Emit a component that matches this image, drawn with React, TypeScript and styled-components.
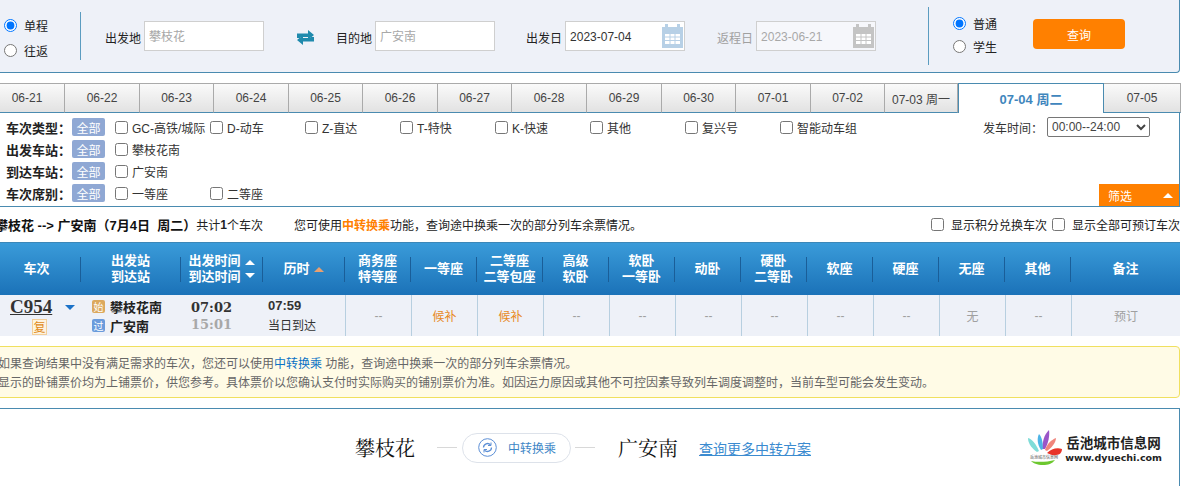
import styled, {createGlobalStyle} from 'styled-components'

const teal = '#4a8bb0'
const cols = '81px 100px 82px 82px repeat(11, 66px) 109px'

const GlobalStyle = createGlobalStyle`
  html, body {
    margin: 0;
    width: 1188px;
    height: 486px;
    overflow: hidden;
    background: #fff;
  }
  body {
    font-family: "Liberation Sans", "Noto Sans CJK SC", sans-serif;
    font-size: 12px;
    color: #333;
  }
  input[type="radio"], input[type="checkbox"] {
    margin: 0;
    width: 13px;
    height: 13px;
    flex: none;
  }
`

const Page = styled.div`
  width: 1180px;
  height: 486px;
  display: flex;
  flex-direction: column;
`

const SearchPanel = styled.form`
  box-sizing: border-box;
  height: 73px;
  flex: none;
  display: flex;
  align-items: center;
  background: #eef1f8;
  border-bottom: 1px solid ${teal};
  border-right: 1px solid ${teal};
  border-bottom-right-radius: 4px;
`

const RadioGroup = styled.div<{ $left: number; $width: number; $gap: number; $top: number }>`
  width: ${p => p.$width}px;
  margin-left: ${p => p.$left}px;
  margin-top: ${p => p.$top}px;
  flex: none;
  display: flex;
  flex-direction: column;
  gap: ${p => p.$gap}px;
`

const RadioLabel = styled.label`
  display: flex;
  align-items: center;
  gap: 7px;
  height: 14px;
  color: #222;
`

const Divider = styled.div<{ $left: number; $height: number }>`
  width: 1px;
  height: ${p => p.$height}px;
  margin-left: ${p => p.$left}px;
  background: #5b9cc0;
  flex: none;
`

const Field = styled.div<{ $left: number; $off?: boolean }>`
  display: flex;
  align-items: center;
  gap: 3px;
  margin-left: ${p => p.$left}px;
  color: ${p => (p.$off ? '#a0a0a0' : '#222')};
  flex: none;
`

const FieldLabel = styled.span`
  padding-top: 3px;
`

const FieldBox = styled.div<{ $off?: boolean }>`
  box-sizing: border-box;
  width: 120px;
  height: 30px;
  display: flex;
  align-items: center;
  padding: 0 1px 0 4px;
  background: ${p => (p.$off ? '#f6f7fb' : '#fff')};
  border: 1px solid #cfcfcf;
`

const FieldInput = styled.input`
  flex: 1;
  min-width: 0;
  border: 0;
  padding: 2px 0 0;
  outline: 0;
  background: transparent;
  color: #333;
  font: inherit;

  &::placeholder {
    color: #a8a8a8;
  }

  &:disabled {
    color: #a8a8a8;
  }
`

const SwapButton = styled.button`
  margin: 2px 0 0 33px;
  width: 17px;
  height: 15px;
  padding: 0;
  border: 0;
  background: none;
  flex: none;
  display: flex;
`

const SearchButton = styled.button`
  width: 92px;
  height: 30px;
  flex: none;
  margin-top: -4px;
  border: 0;
  border-radius: 4px;
  background: #ff8000;
  color: #fff;
  font: inherit;
`

const Tabs = styled.div`
  margin: 10px 0 0 -10px;
  height: 30px;
  flex: none;
  display: flex;
`

const Tab = styled.div<{ $w: number; $active?: boolean }>`
  box-sizing: border-box;
  width: ${p => p.$w}px;
  flex: none;
  display: flex;
  align-items: center;
  justify-content: center;
  white-space: nowrap;
  font-weight: ${p => (p.$active ? 700 : 400)};
  font-size: ${p => (p.$active ? 13 : 12)}px;
  color: ${p => (p.$active ? '#3f86bd' : '#444')};
  background: ${p => (p.$active ? '#fff' : 'linear-gradient(#fafafa, #e2e2e2)')};
  border-top: 1px solid ${p => (p.$active ? teal : '#aaa')};
  border-right: 1px solid ${p => (p.$active ? teal : '#aaa')};
  border-left: ${p => (p.$active ? `1px solid ${teal}` : '0')};
  border-bottom: ${p => (p.$active ? '0' : `1px solid ${teal}`)};
`

const FilterPanel = styled.div`
  box-sizing: border-box;
  height: 94px;
  flex: none;
  padding-top: 3px;
  border-right: 1px solid ${teal};
  border-bottom: 1px solid ${teal};
  display: flex;
  flex-direction: column;
`

const FilterRow = styled.div`
  height: 22px;
  flex: none;
  display: flex;
  align-items: center;
  padding-left: 6px;
`

const FilterName = styled.span`
  width: 60px;
  flex: none;
  font-size: 13px;
  font-weight: 700;
  white-space: nowrap;
  color: #222;
`

const AllTag = styled.span`
  box-sizing: border-box;
  width: 33px;
  height: 18px;
  margin: 0 10px 0 6px;
  flex: none;
  display: flex;
  align-items: center;
  justify-content: center;
  background: #8fa8d4;
  border-radius: 2px;
  color: #fff;
`

const Option = styled.label`
  width: 95px;
  flex: none;
  display: flex;
  align-items: center;
  gap: 4px;
  white-space: nowrap;
  color: #333;
`

const TimeFilter = styled.div`
  margin-left: auto;
  margin-right: 29px;
  display: flex;
  align-items: center;
  gap: 4px;
  color: #333;
`

const TimeSelect = styled.select`
  width: 103px;
  height: 20px;
  padding: 0;
  font: inherit;
  color: #444;
  background: #fff;
  border: 1px solid #767676;
  border-radius: 2px;
`

const FilterToggle = styled.div`
  box-sizing: border-box;
  width: 80px;
  height: 22px;
  margin: 2px 0 -2px auto;
  padding: 0 6px 0 9px;
  display: flex;
  align-items: center;
  justify-content: space-between;
  background: #ff8000;
  color: #fff;
`

const Arrow = styled.i<{ $up?: boolean; $color: string; $size?: number }>`
  display: block;
  flex: none;
  width: 0;
  height: 0;
  border-left: ${p => p.$size ?? 5}px solid transparent;
  border-right: ${p => p.$size ?? 5}px solid transparent;
  border-bottom: ${p => (p.$up ? `${p.$size ?? 5}px solid ${p.$color}` : '0')};
  border-top: ${p => (p.$up ? '0' : `${p.$size ?? 5}px solid ${p.$color}`)};
`

const SummaryBar = styled.div`
  height: 35px;
  flex: none;
  display: flex;
  align-items: center;
  white-space: nowrap;
  color: #222;
`

const Route = styled.b`
  margin-left: -5px;
  font-size: 13px;
  color: #111;
`

const TransferHint = styled.span`
  margin-left: 31px;
`

const Hot = styled.b`
  color: #ff8000;
`

const SummaryChecks = styled.div`
  margin-left: auto;
  display: flex;
  align-items: center;
  gap: 5px;
`

const SummaryCheck = styled.label`
  display: flex;
  align-items: center;
  gap: 7px;
`

const HeadRow = styled.div`
  box-sizing: border-box;
  height: 53px;
  flex: none;
  display: grid;
  grid-template-columns: ${cols};
  align-items: center;
  background: linear-gradient(#3a9bd9, #1b72b8);
  border-top: 1px solid #3b87b8;
  color: #fff;
  font-size: 13px;
  font-weight: 700;
  line-height: 16px;
  text-align: center;
`

const HeadCell = styled.div`
  box-sizing: border-box;
  height: 25px;
  display: flex;
  align-items: center;
  justify-content: center;
  gap: 4px;
  border-right: 1px solid #1a5e98;

  &:first-child {
    padding-right: 7px;
  }

  &:last-child {
    border-right: 0;
  }
`

const SortArrows = styled.span`
  display: flex;
  flex-direction: column;
  gap: 8px;
`

const BodyRow = styled.div`
  height: 41px;
  flex: none;
  display: grid;
  grid-template-columns: ${cols};
  background: #eef1f8;
`

const TrainCell = styled.div`
  padding: 2px 0 0 10px;
  display: grid;
  grid-template-columns: 55px 12px;
  align-items: center;
  justify-items: start;
`

const TrainNo = styled.a`
  font-family: "Liberation Serif", serif;
  font-weight: 700;
  font-size: 19px;
  line-height: 18px;
  color: #333;
  text-decoration: underline;
`

const FuxingTag = styled.span`
  box-sizing: border-box;
  width: 15px;
  height: 16px;
  margin-left: 22px;
  display: flex;
  align-items: center;
  justify-content: center;
  background: #fdf3df;
  border: 1px solid #f3cf9a;
  color: #e08a20;
  font-size: 12px;
`

const StationCell = styled.div`
  padding-left: 11px;
  display: flex;
  flex-direction: column;
  justify-content: center;
  gap: 3px;
`

const Station = styled.div`
  height: 16px;
  display: flex;
  align-items: center;
  gap: 5px;
  font-size: 13px;
  font-weight: 700;
  color: #222;
`

const StationBadge = styled.span<{ $bg: string }>`
  width: 13px;
  height: 13px;
  display: flex;
  align-items: center;
  justify-content: center;
  border-radius: 2px;
  background: ${p => p.$bg};
  color: #fff;
  font-size: 10px;
  font-weight: 400;
`

const TimeCell = styled.div`
  padding-left: 10px;
  display: flex;
  flex-direction: column;
  justify-content: center;
`

const TimeText = styled.div<{ $gray?: boolean }>`
  font-family: "DejaVu Serif", serif;
  font-weight: 700;
  font-size: 13px;
  line-height: 17px;
  color: ${p => (p.$gray ? '#a8a8a8' : '#333')};
`

const DurationCell = styled.div`
  padding-left: 5px;
  display: flex;
  flex-direction: column;
  justify-content: center;
  gap: 3px;
  color: #333;
`

const Duration = styled.b`
  font-size: 13px;
  line-height: 15px;
`

const SeatCell = styled.div<{ $color?: string }>`
  display: flex;
  align-items: center;
  justify-content: center;
  border-left: 1px solid #b7cfe0;
  color: ${p => p.$color ?? '#a0a0a0'};
`

const Notice = styled.div`
  box-sizing: border-box;
  height: 52px;
  margin: 10px 0 10px -10px;
  flex: none;
  padding: 8px 0 0 7px;
  background: #fffbe6;
  border: 1px solid #f0e05f;
  border-radius: 4px;
  color: #666;
  line-height: 19px;
  white-space: nowrap;
`

const NoticeLink = styled.a`
  color: #0a72c5;
`

const TransferPanel = styled.div`
  flex: 1;
  display: flex;
  align-items: center;
  padding: 0 17px 0 355px;
  border-top: 1px solid ${teal};
  border-right: 1px solid ${teal};
`

const CityName = styled.span<{ $left?: number }>`
  margin-left: ${p => p.$left ?? 0}px;
  font-family: "Liberation Serif", "Noto Serif CJK SC", "Noto Sans CJK SC", serif;
  font-size: 20px;
  color: #111;
`

const Line = styled.i<{ $left?: number }>`
  display: block;
  width: 20px;
  height: 1px;
  margin-left: ${p => p.$left ?? 0}px;
  background: #d8d8d8;
  flex: none;
`

const TransferPill = styled.div`
  box-sizing: border-box;
  width: 109px;
  height: 30px;
  margin: 0 4px 0 5px;
  display: flex;
  align-items: center;
  gap: 11px;
  padding-left: 15px;
  border: 1px solid #dde2ea;
  border-radius: 15px;
  color: #3d86c6;
  flex: none;
`

const MoreLink = styled.a`
  margin-left: 21px;
  font-size: 14px;
  color: #3b8bd0;
  text-decoration: underline;
`

const Logo = styled.div`
  margin-left: auto;
  display: flex;
  align-items: center;
  gap: 1px;
`

const LogoText = styled.div`
  margin-top: 3px;
  display: flex;
  flex-direction: column;
  align-items: center;
  color: #222;
  font-weight: 700;
`

const LogoName = styled.span`
  font-size: 13.5px;
  line-height: 16px;
`

const LogoUrl = styled.span`
  font-family: "DejaVu Sans", sans-serif;
  font-size: 9.5px;
  line-height: 11px;
`

const Calendar = ({color}: { color: string }) => (
  <svg width="21" height="24" viewBox="0 0 21 24">
    <rect x="0" y="3" width="21" height="21" fill={color}/>
    <rect x="3" y="0" width="3" height="5" fill={color}/>
    <rect x="15" y="0" width="3" height="5" fill={color}/>
    <path d="M3 10h15v10H3z" fill="#fff"/>
    <path d="M3 13h15M3 16.500h15M8 10v10M13 10v10" stroke={color} strokeWidth="1"/>
  </svg>
)

const SwapIcon = () => (
  <svg width="17" height="15" viewBox="0 0 17 15">
    <path d="M0 8V3.500h11V0l6 5-6 5V7H3v1z" fill="#1f8aad"/>
    <path d="M17 7v4.500H6V15l-6-5 6-5v3h8V7z" fill="#1f8aad"/>
  </svg>
)

const TransferIcon = () => (
  <svg width="19" height="19" viewBox="0 0 19 19" fill="none" stroke="#5c8fd6">
    <circle cx="9.500" cy="9.500" r="8.800"/>
    <path d="M5.500 9.500a4 4 0 0 1 7-2.600M13.500 9.500a4 4 0 0 1-7 2.600" strokeWidth="1.300"/>
    <path d="M13 4.500v3h-3M6 14.500v-3h3" strokeWidth="1"/>
  </svg>
)

const LogoMark = () => (
  <svg width="36" height="36" viewBox="0 0 36 36">
    <path d="M9 22C2 17 0 12 0 8c4 1 8 6 11 13z" fill="#7fdcd8"/>
    <path d="M13 20C9 14 9 8 11 4c3 3 4 9 4 15z" fill="#4db4e6"/>
    <path d="M15 19c-1-7 1-14 6-19 1 6-1 14-4 19z" fill="#9a55c8"/>
    <path d="M17 20c2-6 6-10 11-12 0 5-5 10-9 13z" fill="#f0857c"/>
    <path d="M19 23c4-4 10-6 15-4 0 3-2 6-6 6-4 1-6-1-9-2z" fill="#e8352a"/>
    <text x="16" y="29" fontSize="4" textAnchor="middle" fontFamily="Noto Sans CJK SC" fill="#555">岳池城市信息网</text>
    <path d="M3 31c7 1.500 16 1 24-1-3 4-7 5-12 5-6 0-10-2-12-4z" fill="#6cc72e"/>
  </svg>
)

const tabs: [string, number][] = [
  ['06-21', 75], ['06-22', 75], ['06-23', 74], ['06-24', 75], ['06-25', 74], ['06-26', 75],
  ['06-27', 74], ['06-28', 75], ['06-29', 75], ['06-30', 74], ['07-01', 75], ['07-02', 74],
  ['07-03 周一', 73]
]

const typeOptions = ['GC-高铁/城际', 'D-动车', 'Z-直达', 'T-特快', 'K-快速', '其他', '复兴号', '智能动车组']

const seats: [string, string?][] = [
  ['--'], ['候补', '#e8891c'], ['候补', '#e8891c'], ['--'], ['--'], ['--'], ['--'],
  ['--'], ['--'], ['无'], ['--'], ['预订']
]

export default function App() {
  return (
    <Page>
      <GlobalStyle/>
      <SearchPanel>
        <RadioGroup $left={4} $width={76} $gap={11} $top={3}>
          <RadioLabel><input type="radio" name="trip" defaultChecked/>单程</RadioLabel>
          <RadioLabel><input type="radio" name="trip"/>往返</RadioLabel>
        </RadioGroup>
        <Divider $left={0} $height={48}/>
        <Field $left={24}>
          <FieldLabel>出发地</FieldLabel>
          <FieldBox><FieldInput placeholder="攀枝花"/></FieldBox>
        </Field>
        <SwapButton type="button" aria-label="swap"><SwapIcon/></SwapButton>
        <Field $left={22}>
          <FieldLabel>目的地</FieldLabel>
          <FieldBox><FieldInput placeholder="广安南"/></FieldBox>
        </Field>
        <Field $left={31}>
          <FieldLabel>出发日</FieldLabel>
          <FieldBox><FieldInput defaultValue="2023-07-04"/><Calendar color="#b7d0e6"/></FieldBox>
        </Field>
        <Field $left={32} $off>
          <FieldLabel>返程日</FieldLabel>
          <FieldBox $off><FieldInput disabled defaultValue="2023-06-21"/><Calendar color="#c4c4c4"/></FieldBox>
        </Field>
        <Divider $left={52} $height={58}/>
        <RadioGroup $left={24} $width={80} $gap={9} $top={-2}>
          <RadioLabel><input type="radio" name="who" defaultChecked/>普通</RadioLabel>
          <RadioLabel><input type="radio" name="who"/>学生</RadioLabel>
        </RadioGroup>
        <SearchButton type="button">查询</SearchButton>
      </SearchPanel>

      <Tabs>
        {tabs.map(([label, w]) => <Tab key={label} $w={w}>{label}</Tab>)}
        <Tab $w={146} $active>07-04 周二</Tab>
        <Tab $w={77}>07-05</Tab>
      </Tabs>

      <FilterPanel>
        <FilterRow>
          <FilterName>车次类型：</FilterName>
          <AllTag>全部</AllTag>
          {typeOptions.map(o => <Option key={o}><input type="checkbox"/>{o}</Option>)}
          <TimeFilter>
            发车时间：
            <TimeSelect defaultValue="all"><option value="all">00:00--24:00</option></TimeSelect>
          </TimeFilter>
        </FilterRow>
        <FilterRow>
          <FilterName>出发车站：</FilterName>
          <AllTag>全部</AllTag>
          <Option><input type="checkbox"/>攀枝花南</Option>
        </FilterRow>
        <FilterRow>
          <FilterName>到达车站：</FilterName>
          <AllTag>全部</AllTag>
          <Option><input type="checkbox"/>广安南</Option>
        </FilterRow>
        <FilterRow>
          <FilterName>车次席别：</FilterName>
          <AllTag>全部</AllTag>
          <Option><input type="checkbox"/>一等座</Option>
          <Option><input type="checkbox"/>二等座</Option>
          <FilterToggle>筛选<Arrow $up $color="#fff"/></FilterToggle>
        </FilterRow>
      </FilterPanel>

      <SummaryBar>
        <Route>攀枝花 --&gt; 广安南（7月4日&nbsp; 周二）</Route>
        共计<b>1</b>个车次
        <TransferHint>您可使用<Hot>中转换乘</Hot>功能，查询途中换乘一次的部分列车余票情况。</TransferHint>
        <SummaryChecks>
          <SummaryCheck><input type="checkbox"/>显示积分兑换车次</SummaryCheck>
          <SummaryCheck><input type="checkbox"/>显示全部可预订车次</SummaryCheck>
        </SummaryChecks>
      </SummaryBar>

      <HeadRow>
        <HeadCell>车次</HeadCell>
        <HeadCell><span>出发站<br/>到达站</span></HeadCell>
        <HeadCell>
          <span>出发时间<br/>到达时间</span>
          <SortArrows><Arrow $up $color="#fff"/><Arrow $color="#fff"/></SortArrows>
        </HeadCell>
        <HeadCell>历时<Arrow $up $color="#e8a070"/></HeadCell>
        <HeadCell><span>商务座<br/>特等座</span></HeadCell>
        <HeadCell>一等座</HeadCell>
        <HeadCell><span>二等座<br/>二等包座</span></HeadCell>
        <HeadCell><span>高级<br/>软卧</span></HeadCell>
        <HeadCell><span>软卧<br/>一等卧</span></HeadCell>
        <HeadCell>动卧</HeadCell>
        <HeadCell><span>硬卧<br/>二等卧</span></HeadCell>
        <HeadCell>软座</HeadCell>
        <HeadCell>硬座</HeadCell>
        <HeadCell>无座</HeadCell>
        <HeadCell>其他</HeadCell>
        <HeadCell>备注</HeadCell>
      </HeadRow>

      <BodyRow>
        <TrainCell>
          <TrainNo>C954</TrainNo>
          <Arrow $color="#1b72c8"/>
          <FuxingTag>复</FuxingTag>
        </TrainCell>
        <StationCell>
          <Station><StationBadge $bg="#dca95e">始</StationBadge>攀枝花南</Station>
          <Station><StationBadge $bg="#6a9bdc">过</StationBadge>广安南</Station>
        </StationCell>
        <TimeCell>
          <TimeText>07:02</TimeText>
          <TimeText $gray>15:01</TimeText>
        </TimeCell>
        <DurationCell>
          <Duration>07:59</Duration>
          <span>当日到达</span>
        </DurationCell>
        {seats.map(([text, color], i) => <SeatCell key={i} $color={color}>{text}</SeatCell>)}
      </BodyRow>

      <Notice>
        如果查询结果中没有满足需求的车次，您还可以使用<NoticeLink>中转换乘</NoticeLink> 功能，查询途中换乘一次的部分列车余票情况。
        <br/>
        显示的卧铺票价均为上铺票价，供您参考。具体票价以您确认支付时实际购买的铺别票价为准。如因运力原因或其他不可控因素导致列车调度调整时，当前车型可能会发生变动。
      </Notice>

      <TransferPanel>
        <CityName>攀枝花</CityName>
        <Line $left={22}/>
        <TransferPill><TransferIcon/>中转换乘</TransferPill>
        <Line/>
        <CityName $left={23}>广安南</CityName>
        <MoreLink>查询更多中转方案</MoreLink>
        <Logo>
          <LogoMark/>
          <LogoText>
            <LogoName>岳池城市信息网</LogoName>
            <LogoUrl>www.dyuechi.com</LogoUrl>
          </LogoText>
        </Logo>
      </TransferPanel>
    </Page>
  )
}
